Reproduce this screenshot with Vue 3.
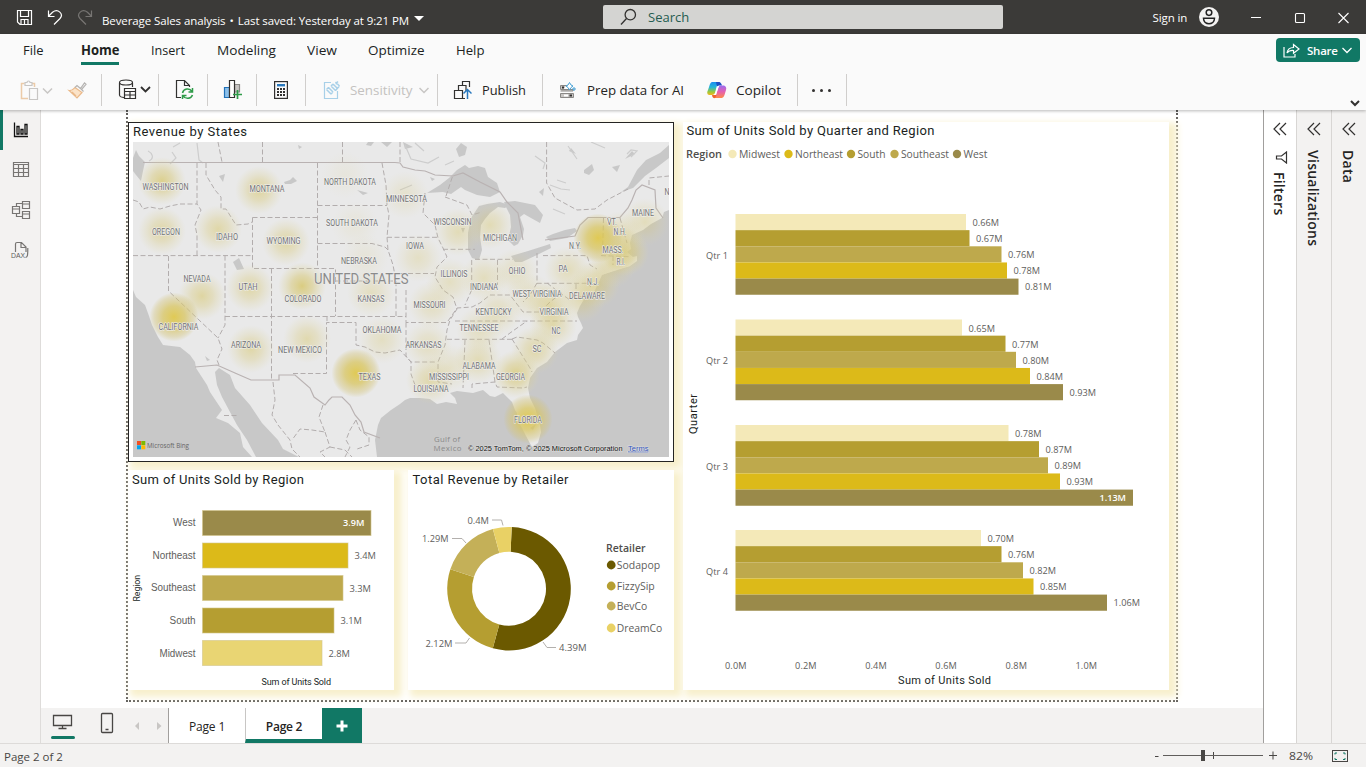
<script setup>
const tabs = ['File', 'Home', 'Insert', 'Modeling', 'View', 'Optimize', 'Help']
const tabWidths = [20.5, 38.5, 34, 59, 30, 56.5, 28.5]
const tabList = tabs.map((label, i) => ({ label, w: tabWidths[i] }))

const palette = ['#f4e9b8', '#b59e31', '#bea94c', '#dcba19', '#9a8a4a']
const quarters = [
  { name: 'Qtr 1', y: 214, w: [230.5, 234, 266, 271.5, 283], v: ['0.66M', '0.67M', '0.76M', '0.78M', '0.81M'] },
  { name: 'Qtr 2', y: 319.5, w: [226.5, 270, 280.5, 294.5, 327.5], v: ['0.65M', '0.77M', '0.80M', '0.84M', '0.93M'] },
  { name: 'Qtr 3', y: 425, w: [273, 303.5, 312.5, 324.5, 397.5], v: ['0.78M', '0.87M', '0.89M', '0.93M', '1.13M'] },
  { name: 'Qtr 4', y: 530, w: [245.5, 266, 287.5, 298, 371.5], v: ['0.70M', '0.76M', '0.82M', '0.85M', '1.06M'] }
]
const axis = ['0.0M', '0.2M', '0.4M', '0.6M', '0.8M', '1.0M']
const legend = [
  { n: 'Midwest', x: 739, w: 41, c: '#f4e9b8' },
  { n: 'Northeast', x: 795, w: 48, c: '#dcba19' },
  { n: 'South', x: 857.5, w: 28, c: '#b59e31' },
  { n: 'Southeast', x: 901, w: 48, c: '#bea94c' },
  { n: 'West', x: 963.5, w: 24, c: '#9a8a4a' }
]
const regions = [
  { n: 'West', w: 169, v: '3.9M', c: '#9a8a4a', tw: 22.5 },
  { n: 'Northeast', w: 146, v: '3.4M', c: '#dcba19', tw: 43 },
  { n: 'Southeast', w: 141, v: '3.3M', c: '#bea94c', tw: 44.5 },
  { n: 'South', w: 132, v: '3.1M', c: '#b59e31', tw: 26 },
  { n: 'Midwest', w: 120, v: '2.8M', c: '#e9d573', tw: 36 }
]
const retailers = [
  { n: 'Sodapop', y: 565, w: 43.5, c: '#6b5900' },
  { n: 'FizzySip', y: 586, w: 38, c: '#b59e31' },
  { n: 'BevCo', y: 606, w: 30.5, c: '#c4b058' },
  { n: 'DreamCo', y: 628, w: 45.5, c: '#e9d165' }
]
function arc(a, b) {
  const cx = 509, cy = 588.7, R = 61.8, r = 37
  const p = (rad, deg) => {
    const t = (deg * Math.PI) / 180
    return `${(cx + rad * Math.sin(t)).toFixed(2)} ${(cy - rad * Math.cos(t)).toFixed(2)}`
  }
  const big = b - a > 180 ? 1 : 0
  return `M${p(R, a)}A${R} ${R} 0 ${big} 1 ${p(R, b)}L${p(r, b)}A${r} ${r} 0 ${big} 0 ${p(r, a)}Z`
}
const slices = [
  { d: arc(2.5, 195.2), c: '#6b5900' },
  { d: arc(195.2, 288.3), c: '#b59e31' },
  { d: arc(288.3, 344.9), c: '#c4b058' },
  { d: arc(344.9, 362.5), c: '#e9d165' }
]

const spots = [
  [162, 181, .7], [259, 190, .58], [162, 231, .52], [218, 229, .5], [286, 242, .52], [202, 296, .55], [250, 288, .5],
  [302, 286, .8], [251, 349, .5], [307, 339, .45], [382, 340, .3], [371, 293, .32], [365, 258, .14],
  [345, 175, .1], [355, 225, .12], [405, 195, .22], [418, 258, .28], [458, 232, .38], [490, 225, .4], [450, 282, .3],
  [484, 278, .34], [515, 272, .28], [432, 305, .32], [428, 345, .32], [430, 380, .48], [450, 368, .26], [478, 360, .4],
  [480, 330, .32], [498, 312, .34], [530, 297, .3], [550, 305, .5], [553, 325, .45], [535, 350, .5], [516, 374, .7],
  [568, 270, .36], [625, 252, .75], [620, 235, .4], [645, 222, .35], [596, 284, .55], [582, 298, .45], [612, 264, .45]
]
const hot = [[174, 317], [356, 373], [528, 419], [598, 238]]

const places = [
  ['WASHINGTON', 165.5, 190, 46], ['MONTANA', 267, 191.5, 35], ['NORTH DAKOTA', 350, 185, 52], ['MINNESOTA', 406.5, 201.5, 41],
  ['OREGON', 166, 234.5, 28], ['IDAHO', 227, 239.5, 22], ['WYOMING', 283.5, 244, 34], ['SOUTH DAKOTA', 352, 226, 52],
  ['NEBRASKA', 359, 264, 36], ['NEVADA', 197, 282, 27], ['UTAH', 248, 290, 19], ['COLORADO', 303, 301.5, 37],
  ['KANSAS', 371, 301.5, 27], ['CALIFORNIA', 178.5, 329.5, 40], ['ARIZONA', 246, 347.5, 30], ['NEW MEXICO', 300, 352.5, 44],
  ['TEXAS', 369.5, 380, 22], ['OKLAHOMA', 382, 333, 39], ['WISCONSIN', 452.5, 224.5, 38], ['MICHIGAN', 500, 241, 34],
  ['IOWA', 415, 249, 18], ['ILLINOIS', 454, 277, 27], ['OHIO', 517, 273.5, 17], ['INDIANA', 484, 290, 28], ['N.Y.', 575, 249, 12],
  ['PA', 563, 272, 9], ['N.J.', 593, 285, 12], ['VT.', 612, 224.5, 10], ['N.H.', 620, 234.5, 13], ['MASS.', 613, 252.5, 21],
  ['R.I.', 621, 265, 9], ['MAINE', 643, 216, 22], ['N', 667, 195, 5], ['MISSOURI', 429.5, 308, 32], ['WEST VIRGINIA', 537, 297, 49],
  ['DELAWARE', 587, 298.5, 36], ['KENTUCKY', 493.5, 314.5, 36], ['VIRGINIA', 554, 314.5, 29], ['TENNESSEE', 479, 331, 39],
  ['NC', 556, 334, 9], ['SC', 537, 352, 9], ['ARKANSAS', 423.5, 347.5, 36], ['ALABAMA', 479, 368.5, 33], ['MISSISSIPPI', 449, 380, 40],
  ['GEORGIA', 510.5, 380, 29], ['LOUISIANA', 431, 391.5, 35], ['FLORIDA', 528, 423, 28]
]
const dashes = [
  'M133 200L139 202 143 209 150 207 160 209 170 206 180 204H197', 'M197 163V204L201 210 195 225 197 235V255', 'M133 255.6H252',
  'M206 163V175L215 190 221 197V209H226L236 225 248 224 252 222', 'M252.5 217.5H317.5M252.5 217.5V268.5H335.5V316M317.5 163V268.5',
  'M317.5 205.5H387M317.5 243.5H372L385 247 388 250M335.5 281H396', 'M382 163L386 185 387 205 389 215 387 237 388 250 393 265 396 281V316',
  'M387 237.3H437M393 273.5H434', 'M225 255.6V325L218 338M168.5 256V291L218 338 222 349 217 360 219 365', 'M225 316.5H406M271.5 268.5V380',
  'M293 373.5H326.5V322.5H356V345L365 347 375 352 385 353 400 350 411 362V374L415 385M327 316V322',
  'M406 290V322.5H448M406 322.5V356L411 362H437', 'M425 193L423 213 435 225 438 238 443 248 447 257 437 267 435 277 443 290 453 297 457 309 450 320 447 330 445 345 438 362V382L452 384',
  'M443 249.3H475M471.7 260V290L465 305M497.5 260V285M475 259.3H513', 'M537 253V283.3H587L591 287M543 255.6H587L590 265 597 269',
  'M603.5 218L602.5 256M620 218L627 243M601 255.6L630 256.7M613 256V265', 'M546.6 142V183L555 198 577 210 595 209 607 200 630 188M649 185V178L669 176',
  'M445 197L467 205 472 215 482 212M446 196L453 175', 'M455 321H577M447 339.3H512', 'M512 339L517 337 537 340 543 343 555 353M502 339L510 333 527 321',
  'M512 339L530 368 532 372M465 340L463 388M489 340L495 382M472 388V384L495 382 497 387 523 388 527 387',
  'M448 321L457 308 472 307 480 303 490 295 510 295 523 312 540 312 550 302 563 292M537 283L530 295 523 302M547 283L560 293 570 300',
  'M262.5 142V163M342.5 142V163M218 142L222 162M400 142V162', 'M273 382L275 400 272 415 278 425 290 440 292 449 300 457',
  'M323 405L319 417 325 432 312 430 300 429 292 440M325 432L330 447 320 452 325 457M330 447L345 450 352 457M356 420L350 430 346 440 350 447 345 457M356 420L360 430 369 437V445L357 449',
  'M224 415.5H237M576 284V296L582 297'
]
</script>

<template>
  <div class="app">
    <header class="titlebar">
      <svg class="quick" width="100" height="34" viewBox="0 0 100 34" fill="none" stroke="#fff" stroke-width="1.2">
        <path d="M17.5 10.500H31.500V24.500H20L17.500 22ZM20.500 10.500V16.500H28.500V10.500M21 24V19.500H28V24M24.500 20V24" />
        <path d="M48.500 10.500V16.500H54.500M48.800 16L52.500 12.300C58 8 64 14 60 18.500L54 24.500" />
        <path stroke="#777573" d="M91.500 10.500V16.500H85.500M91.200 16L87.500 12.300C82 8 76 14 80 18.500L86 24.500" />
      </svg>
      <div class="doc"><span>Beverage Sales analysis</span><i>•</i><span class="saved">Last saved: Yesterday at 9:21 PM</span></div>
      <svg class="caret" width="10" height="6"><path d="M0 0H10L5 5Z" fill="#fff" /></svg>
      <div class="search">
        <svg width="18" height="18" viewBox="0 0 18 18" fill="none" stroke="#323130" stroke-width="1.3"><circle cx="10.300" cy="6.700" r="5.200" /><path d="M6.500 10.500L1 16.500" /></svg>
        <span>Search</span>
      </div>
      <span class="signin">Sign in</span>
      <svg class="avatar" width="20" height="20"><circle cx="10" cy="10" r="10" fill="#f3f2f1" /><g fill="none" stroke="#222" stroke-width="1.500"><circle cx="10" cy="5.600" r="2.800" /><path d="M4.500 11.300H15.500C15.500 18.500 4.500 18.500 4.500 11.300Z" /></g></svg>
      <svg class="win" width="110" height="34" fill="none" stroke="#fff" stroke-width="1.100"><path d="M5 17.500H15M92.500 13L102.500 23M102.500 13L92.500 23" /><rect x="49.500" y="13.500" width="9" height="9" rx="1" /></svg>
    </header>

    <div class="ribbon">
      <nav class="tabs">
        <div v-for="t in tabList" :key="t.label" class="tab" :class="{ on: t.label === 'Home' }">
          <svg :width="t.w + 1" height="20"><text x="0" y="15" :textLength="t.w" lengthAdjust="spacingAndGlyphs">{{ t.label }}</text></svg>
        </div>
        <button class="share">
          <svg width="17" height="15" viewBox="0 0 17 15" fill="none" stroke="#fff" stroke-width="1.200"><path d="M1 4V14H12V11M4 10C4.500 6.500 7 4.500 10.500 4.500V1.500L16 6 10.500 10.200V7.500C7.500 7.300 5.500 8 4 10Z" /></svg>
          <span>Share</span>
          <svg width="10" height="7" fill="none" stroke="#fff" stroke-width="1.300"><path d="M.5 1L5 5.500 9.500 1" /></svg>
        </button>
      </nav>
      <div class="tools">
        <div class="grp g1">
          <svg width="68" height="26" viewBox="20 77 68 26" fill="none" stroke-width="1.200">
            <path stroke="#eccba8" stroke-width="1.500" d="M28 98.500H21.500V83.500H24.500M32 83.500H34.500V87" /><path stroke="#c8c6c4" d="M25 85.500V82.500H27C27 80.500 30 80.500 30 82.500H32V85.500ZM29.500 88.500H37.500V99.500H29.500Z" />
            <path stroke="#c8c6c4" stroke-width="1.500" d="M43 88.500L47.500 93 52 88.500" />
            <path fill="#fbe3c8" stroke="#eab98a" d="M69 90.500C72 91 74 88.500 75 87.500L82 92.500 77 98ZM72 92L76 96" /><path stroke="#b5b3b1" d="M75 87.500L77 85.500 80.500 88.500 84.500 83 86 84.300 81.500 89.500 83.500 91.500" />
          </svg>
        </div>
        <div class="grp g2">
          <svg width="34" height="24" viewBox="118 79 34 24" fill="none" stroke="#323130" stroke-width="1.200">
            <ellipse cx="126" cy="83.500" rx="6.500" ry="2.500" /><path d="M119.500 84V96C119.500 97.500 122 98.500 124 98.500M132.500 84V88M124.500 89.500H135.500V99.500H124.500ZM124.500 92.500H135.500M124.500 96H135.500M130 92.500V99.500" /><path stroke-width="1.800" d="M141 88L145.500 92.500 150 88" />
          </svg>
        </div>
        <div class="grp g3">
          <svg width="20" height="22" viewBox="175 80 20 22" fill="none" stroke="#323130" stroke-width="1.200">
            <path d="M181 98.500H176.500V81.500H184.500L189.500 86.500V88M184.500 81.500V86.500H189.500" />
            <path stroke="#2f9b49" stroke-width="1.500" d="M182.500 94C183.500 89.500 189.500 88.500 192 92.500M192.500 89V93H188.500M192.500 96C191 100 185.500 100.500 183 96.800M182.500 100V96.500H186.500" />
          </svg>
        </div>
        <div class="grp g4">
          <svg width="20" height="22" viewBox="223 80 20 22" fill="none" stroke="#323130" stroke-width="1.200">
            <path fill="#8cc0ea" stroke="#2071b8" d="M224.500 88.500H229.500V98.500H224.500Z" /><path fill="#c8c6c4" stroke="#8a8886" d="M234.500 85.500H239.500V93H234.500Z" /><path fill="#fff" d="M229.500 81.500H234.500V98.500H229.500Z" /><path stroke="#2f9b49" stroke-width="1.700" d="M237.500 91V100M233 95.500H242" />
          </svg>
        </div>
        <div class="grp g5">
          <svg width="14" height="18" fill="none"><rect x=".6" y=".6" width="12.800" height="16.800" stroke="#323130" stroke-width="1.200" /><path stroke="#2878bd" stroke-width="2.400" d="M3 4.200H11" /><path stroke="#323130" stroke-width="2" stroke-dasharray="2 1" d="M3 8H11M3 11H11M3 14H11" /></svg>
        </div>
        <div class="grp g6">
          <svg width="18" height="20" fill="none" stroke="#a8d0e8" stroke-width="1.200"><path d="M8 2.500H1.500V18.500H14.500V11" /><path d="M3.500 9.500L8 14M5.500 7.500L10 12M3.500 9.500L5.500 7.500M8 14L10 12M8 6L12.500 10.500M10 4L14.500 8.500M12.500 2L16.500 6M8 6L10 4M12.500 10.500L16.500 6M15 1.500L12.500 4" stroke-width="1.500" /></svg>
          <svg class="lbl" width="64" height="20"><text x="0" y="15" textLength="62.500" lengthAdjust="spacingAndGlyphs" fill="#c4c2c0">Sensitivity</text></svg>
          <svg width="10" height="7" fill="none" stroke="#c8c6c4" stroke-width="1.500"><path d="M.5 1L5 5.500 9.500 1" /></svg>
        </div>
        <div class="grp g7">
          <svg width="19" height="20" viewBox="453 80 19 20" fill="none" stroke="#323130" stroke-width="1.200"><path d="M454.500 90.500H462.500V98.500H454.500ZM458.500 90V85.500H462.500M462.500 86V81.500H469.500V87M460 85.500H466V91M462.500 98.500H465" /><path stroke="#2878bd" stroke-width="1.500" d="M467.500 99V90M463.500 93.500L467.500 89.500 471.500 93.500" /></svg>
          <svg class="lbl" width="45" height="20"><text x="0" y="15" textLength="44" lengthAdjust="spacingAndGlyphs">Publish</text></svg>
        </div>
        <div class="grp g8">
          <svg width="17" height="17" viewBox="559 81 17 17" fill="none" stroke="#8a8886"><path fill="#c8c6c4" d="M568 84.500H560.500V88.500H573V90H560.500M560.500 92.500H573.500V96.500H560.500Z" /><path fill="#fff" stroke="none" d="M564 93.500H568V95.500H564ZM565 85.500H568V87.500H565Z" /><path stroke-width="2" stroke="#323130" d="M562 86.500H564M569.500 94.500H572" /><path fill="#fff" stroke="#45a0d5" d="M569.500 81.500L571 84 573 85 571 86.500 569.500 89 568 86.500 566 85 568 84Z" /><path stroke="#45a0d5" d="M574 86V90M572 88H576" /></svg>
          <svg class="lbl" width="98" height="20"><text x="0" y="15" textLength="97" lengthAdjust="spacingAndGlyphs">Prep data for AI</text></svg>
          <svg class="cop" width="20" height="18" viewBox="0 0 20 18">
            <defs>
              <linearGradient id="ca" x1="0" y1="0" x2="0" y2="1"><stop offset="0" stop-color="#1a8df0" /><stop offset=".4" stop-color="#22b6d8" /><stop offset=".75" stop-color="#9bc83c" /><stop offset="1" stop-color="#f2b71c" /></linearGradient>
              <linearGradient id="cb" x1="0" y1="0" x2="0" y2="1"><stop offset="0" stop-color="#9a6cf0" /><stop offset=".5" stop-color="#e560b0" /><stop offset="1" stop-color="#ff8a48" /></linearGradient>
            </defs>
            <path fill="url(#ca)" d="M5 1H13L10 4 8 12Q7 14 5 14H2Q-1 13 1 9L3 3Q4 1 5 1Z" /><path fill="#1b4fc4" d="M9 1H12Q14 1 15 4.500H12Q10.500 4.500 10 6Z" />
            <path fill="url(#cb)" d="M15 17H6L9 14 11.500 6Q12 4.500 14 4.500H17Q20 5.500 19 9L17.500 14Q16.500 17 15 17Z" /><path fill="#f0642f" d="M5 14H9.500L8.500 16.500Q7 18 5.500 16Z" /><path fill="#fff" d="M10.500 5H12L9 13.500H7.800Z" />
          </svg>
          <svg class="lbl" width="46" height="20"><text x="0" y="15" textLength="45" lengthAdjust="spacingAndGlyphs">Copilot</text></svg>
        </div>
        <div class="grp g9"><i></i><i></i><i></i></div>
        <svg class="collapse" width="10" height="7" fill="none" stroke="#323130" stroke-width="2"><path d="M1 1L5 5 9 1" /></svg>
      </div>
    </div>

    <div class="body">
      <aside class="rail">
        <svg width="40" height="160" viewBox="0 110 40 160" fill="none" stroke="#777573" stroke-width="1.200">
          <path stroke="#111" stroke-width="1.300" d="M14.500 122.500V136.500H28M17 134V126.500H19V134ZM21 134V129.500H23V134ZM25 134V124.500H27V134Z" />
          <path d="M13.500 162.500H28.500V176.500H13.500ZM13.500 164.500H28.500M13.500 168.500H28.500M13.500 172.500H28.500M18.500 164.500V176.500M23.500 164.500V176.500" />
          <path d="M12.500 206.500H19.500V213.500H12.500ZM12.500 209H19.500M22.500 201.500H29.500V208.500H22.500ZM22.500 204H29.500M22.500 211.500H29.500V218.500H22.500ZM22.500 214H29.500M16.500 206V203.500H22M16.500 214V216.500H22" />
          <path d="M15.500 252V244Q15.500 242.500 17 242.500H21.500L26 247V252M21 242.500V247.500H26" />
          <path d="M25.500 257.500C27.500 257 27.800 256 27.800 248" />
          <text x="11" y="257.500" class="dax" textLength="14" lengthAdjust="spacingAndGlyphs">DAX</text>
        </svg>
      </aside>

      <main class="main">
        <section class="stage">
          <div class="report">
            <article class="card map">
              <svg width="544" height="338" viewBox="129 123 544 338">
                <defs>
                  <radialGradient id="warm"><stop offset="0" stop-color="#d6c566" stop-opacity="1" /><stop offset=".45" stop-color="#d8ca80" stop-opacity=".72" /><stop offset=".8" stop-color="#dcd39c" stop-opacity=".3" /><stop offset="1" stop-color="#ded7ad" stop-opacity="0" /></radialGradient>
                  <radialGradient id="hot"><stop offset="0" stop-color="#dfc644" stop-opacity=".9" /><stop offset=".45" stop-color="#d8c560" stop-opacity=".75" /><stop offset=".8" stop-color="#d4c478" stop-opacity=".4" /><stop offset="1" stop-color="#d0c06a" stop-opacity="0" /></radialGradient>
                  <clipPath id="mc"><rect x="133" y="142" width="536" height="315" /></clipPath>
                </defs>
                <text class="title" x="133" y="136" textLength="114">Revenue by States</text>
                <g clip-path="url(#mc)">
                  <rect x="133" y="142" width="536" height="315" fill="#e9e9e9" />
                  <g fill="#c8c8c8">
                    <path d="M133 290L136 297 145 305 149 316 152 325 158 337 163 345 180 347 190 355 195 362 196 368 207 385 210 392 222 410 216 418 228 423 240 433 243 447 252 457H133ZM256 457L247 440 237 425 230 412 222 397 217 385 215 372 219 368 230 375 235 388 250 405 262 423 278 440 283 449 299 457Z" />
                    <path d="M377 457L375 440 378 425 381 418 391 410 400 404 405 400 410 398 420 398 430 399 437 404 446 402 457 404 455 398 450 393 457 391 473 393 483 390 490 396 495 397 503 393 512 402 515 410 517 413 517 420 522 428 526 436 532 447 538 443 541 432 540 425 535 408 530 398 528 388 530 378 537 368 547 362 555 352 567 343 577 340 578 335 583 328 581 323 578 317 577 313 580 306 586 296 594 292 598 284 602 275 618 269 630 266 637 261 637 256 633 257 627 252 631 249 630 243 632 235 643 230 651 224 662 218 664 212 669 210V457Z" />
                    <path d="M669 145L660 153 646 160 637 170 628 187 621 192 633 188 645 176 656 168 669 158Z" />
                    <path d="M427 193L440 185 449 178 457 170 465 165 469 168 478 166 485 168 488 177 497 183 500 192 490 197 477 195 465 190 461 187 451 194 443 192Z" />
                    <path d="M472 258L468 250 468 233 471 218 479 206 487 204 500 202 509 205 505 208 498 207 490 213 485 219 481 225 480 237 482 250 479 260Z" />
                    <path d="M504 202L515 201 535 205 543 215 540 223 531 218 524 214 520 217 524 229 523 235 518 244 514 246 508 240 511 227 510 215 506 207Z" />
                    <path d="M511 256L528 251 550 244 551 248 537 255 522 262 515 262ZM546 237L553 234 565 230 575 228 577 231 567 238 550 241Z" />
                    <path d="M133 158L136 150 139 156 145 162 143 171 141 181 136 175 133 171ZM233 262L239 258 244 269 237 270ZM456 149L461 143 467 147 465 155 459 157ZM584 170L592 164 594 170 589 175 584 173ZM612 167L620 165 617 172ZM544 188L543 196 539 192Z" />
                    <path d="M284 182L290 180 293 177 297 181 291 184 285 184ZM298 145L302 147 299 149ZM357 190L368 193 363 195ZM219 176L225 174 223 182ZM368 142L374 142 371 146 366 145ZM403 142L413 147 405 149ZM381 142L392 142 387 147ZM435 179L430 177 432 181ZM465 228L463 233 461 228ZM205 356L210 360 207 361ZM530 428L536 424 533 430ZM571 148L576 154 569 151ZM632 151L635 154 625 159Z" />
                  </g>
                  <path d="M603 270L620 266 630 266 611 272 601 275Z" fill="#e9e9e9" />
                  <path fill="none" stroke="#cdcdcd" stroke-width="1.200" d="M148 151C152 153 155 158 149 161M172 152L176 158 170 164M197 143L199 160 203 163M180 143L173 147M405 145L411 159 428 163 439 157M415 143L424 151M445 165L454 161M535 156L545 163 543 169M557 180L566 183M568 146L577 159M591 142L605 148M550 185L561 189 570 190M627 154L631 150 637 151 631 157M553 209L565 214M400 190L412 185" />
                  <g fill="none" stroke="#b2adad" stroke-width="1" stroke-dasharray="5 2.500"><path v-for="d in dashes" :key="d" :d="d" /></g>
                  <path fill="none" stroke="#b9b2b2" stroke-width="1.200" d="M143 162.500H395L400 163 403 167 415 170 425 171 435 175 453 176 463 173 480 182 500 192 507 202 518 213 523 240M545 240L575 236 580 225 588 217.500H620L628 208 632 200 636 190 642 185 655 190 656 208 663 218M195 367L217 365 235 373 251 380H279V375H295L310 388 314 397 325 405 329 400 332 397H342L350 405 355 415 361 422 364 432 380 438" />
                  <circle v-for="(s, i) in spots" :key="i" :cx="s[0]" :cy="s[1]" r="24" fill="url(#warm)" :opacity="s[2]" />
                  <circle v-for="(s, i) in hot" :key="'h' + i" :cx="s[0]" :cy="s[1]" r="24.500" fill="url(#hot)" />
                  <g class="place"><text v-for="p in places" :key="p[0]" :x="p[1] - p[3] / 2" :y="p[2] + .3" :textLength="p[3]" lengthAdjust="spacingAndGlyphs">{{ p[0] }}</text></g>
                  <text class="country" x="314" y="283.500" textLength="94.500" lengthAdjust="spacingAndGlyphs">UNITED STATES</text>
                  <g class="gulf"><text x="434" y="441.500" textLength="26">Gulf of</text><text x="433.500" y="450.500" textLength="28">Mexico</text></g>
                  <path fill="#f25022" d="M137 441H141V445H137Z" /><path fill="#7fba00" d="M141.300 441H145.300V445H141.300Z" /><path fill="#00a4ef" d="M137 445.300H141V449.300H137Z" /><path fill="#ffb900" d="M141.300 445.300H145.300V449.300H141.300Z" />
                  <text class="bing" x="147" y="448" textLength="42" lengthAdjust="spacingAndGlyphs">Microsoft Bing</text>
                  <text class="copy" x="468" y="450.500" textLength="154.500" lengthAdjust="spacingAndGlyphs">© 2025 TomTom, © 2025 Microsoft Corporation</text>
                  <text class="copy terms" x="628" y="450.500" textLength="20.500" lengthAdjust="spacingAndGlyphs">Terms</text>
                </g>
              </svg>
            </article>

            <article class="card region">
              <svg width="266" height="220" viewBox="128 470 266 220">
                <text class="title" x="132" y="484" textLength="172">Sum of Units Sold by Region</text>
                <g v-for="(r, i) in regions" :key="r.n">
                  <rect x="202.500" :y="510.500 + i * 32.500" :width="r.w - .5" height="25" :fill="r.c" stroke="#d2c58a" stroke-opacity=".6" />
                  <text class="cat" :x="195.500 - r.tw" :y="526 + i * 32.700" :textLength="r.tw" lengthAdjust="spacingAndGlyphs">{{ r.n }}</text>
                  <text v-if="i" class="num" :x="208.500 + r.w" :y="559 + (i - 1) * 32.500" textLength="21.500" lengthAdjust="spacingAndGlyphs">{{ r.v }}</text>
                  <text v-else class="num inv" x="343" y="526" textLength="21.500" lengthAdjust="spacingAndGlyphs">{{ r.v }}</text>
                </g>
                <text class="axis" transform="translate(139.500 601.500) rotate(-90)" textLength="26.500" lengthAdjust="spacingAndGlyphs">Region</text>
                <text class="axis" x="261.500" y="685" textLength="69.500">Sum of Units Sold</text>
              </svg>
            </article>

            <article class="card retail">
              <svg width="266" height="220" viewBox="408 470 266 220">
                <text class="title" x="412.500" y="484" textLength="156">Total Revenue by Retailer</text>
                <path v-for="s in slices" :key="s.c" :d="s.d" :fill="s.c" />
                <path fill="none" stroke="#b3b0ad" d="M492 520H501.500L503 525.500M452 538.500H462L466 543M455 643H466L469.500 638M556 647.500H547L543 642" />
                <text class="num" x="467.500" y="524" textLength="21.500" lengthAdjust="spacingAndGlyphs">0.4M</text>
                <text class="num" x="422" y="542" textLength="26.500" lengthAdjust="spacingAndGlyphs">1.29M</text>
                <text class="num" x="425.500" y="647" textLength="27" lengthAdjust="spacingAndGlyphs">2.12M</text>
                <text class="num" x="559" y="651" textLength="27.500" lengthAdjust="spacingAndGlyphs">4.39M</text>
                <text class="lhead" x="606" y="552" textLength="39.500" lengthAdjust="spacingAndGlyphs">Retailer</text>
                <g v-for="r in retailers" :key="r.n"><circle cx="611.200" :cy="r.y" r="4.400" :fill="r.c" /><text class="leg" x="616.800" :y="r.y + 4.200" :textLength="r.w" lengthAdjust="spacingAndGlyphs">{{ r.n }}</text></g>
              </svg>
            </article>

            <article class="card quarter">
              <svg width="486" height="568" viewBox="683 122 486 568">
                <text class="title" x="686.500" y="135" textLength="248">Sum of Units Sold by Quarter and Region</text>
                <text class="lhead" x="686" y="158" textLength="36" lengthAdjust="spacingAndGlyphs">Region</text>
                <g v-for="l in legend" :key="l.n"><circle :cx="l.x - 6.500" cy="154" r="4.200" :fill="l.c" /><text class="leg" :x="l.x" y="158" :textLength="l.w" lengthAdjust="spacingAndGlyphs">{{ l.n }}</text></g>
                <g v-for="q in quarters" :key="q.name">
                  <rect v-for="(w, i) in q.w" :key="i" x="735.500" :y="q.y + i * 16.150" :width="w" height="16.150" :fill="palette[i]" />
                  <text v-for="(v, i) in q.v" :key="'v' + i" class="num" :class="{ inv: v === '1.13M' }" :x="v === '1.13M' ? 1099.500 : 735.500 + q.w[i] + 6.500" :y="q.y + i * 16 + 12" textLength="26.500" lengthAdjust="spacingAndGlyphs">{{ v }}</text>
                  <text class="cat q" x="706" :y="q.y + 44.800" textLength="22">{{ q.name }}</text>
                </g>
                <text v-for="(a, i) in axis" :key="a" class="cat q" :x="725 + i * 70.100" y="668.500" textLength="21.500">{{ a }}</text>
                <text class="axis big" transform="translate(697 434) rotate(-90)" textLength="40">Quarter</text>
                <text class="axis big" x="898" y="684" textLength="93">Sum of Units Sold</text>
              </svg>
            </article>
          </div>
        </section>
        <footer class="pages">
          <svg width="127" height="35" viewBox="41 708 127 35" fill="none" stroke="#484644" stroke-width="1.300">
            <path d="M53.500 715.500H71.500V725.500H53.500ZM62.500 725.500V728.500M58.500 728.500H66.500" /><rect x="101.500" y="713.500" width="11" height="19" rx="1" /><path stroke-width="1.500" d="M105.500 729.500H108.500" />
            <path stroke="#117865" stroke-width="3" stroke-linecap="round" d="M52.500 737.500H73.500" /><path fill="#c8c6c4" stroke="none" d="M139 722V730L135 726ZM157 722V730L161.500 726Z" />
          </svg>
          <div class="page">Page 1</div>
          <div class="page cur">Page 2</div>
          <div class="add"><svg width="12" height="12" stroke="#fff" stroke-width="3"><path d="M6 .5V11.500M.5 6H11.500" /></svg></div>
        </footer>
      </main>

      <aside class="pane filters">
        <svg width="14" height="14"><path d="M7 1L1 7 7 13M13 1L7 7 13 13" /></svg>
        <svg class="funnel" width="13" height="13"><path d="M11.500 1V12L6.500 8H1.500V5H6.500Z" /></svg><span>Filters</span>
      </aside>
      <aside class="pane vis"><svg width="14" height="14"><path d="M7 1L1 7 7 13M13 1L7 7 13 13" /></svg><span>Visualizations</span></aside>
      <aside class="pane data"><svg width="14" height="14"><path d="M7 1L1 7 7 13M13 1L7 7 13 13" /></svg><span>Data</span></aside>
    </div>

    <div class="status">
      <span class="count">Page 2 of 2</span>
      <svg width="211" height="23" viewBox="1155 744 211 23" fill="none" stroke="#484644">
        <path d="M1154.500 756.500H1158.500M1269 755.500H1277M1273 751.500V759.500M1213.500 752V759" /><path stroke="#605e5c" d="M1163 755.500H1263" /><path stroke-width="4" d="M1203 750V761" />
        <text x="1289" y="760" textLength="24" lengthAdjust="spacingAndGlyphs" class="pct">82%</text>
        <rect x="1332.500" y="750.500" width="15" height="11" /><path d="M1335 754.500V753H1337M1343 753H1345V754.500M1345 758V759.500H1343M1337 759.500H1335V758" stroke="#117865" />
      </svg>
    </div>
  </div>
</template>

<style>
body { margin: 0; overflow: hidden; }
</style>

<style scoped>
* { box-sizing: border-box; }
svg { display: block; flex: none; }
.app { width: 1366px; height: 767px; display: flex; flex-direction: column; font-family: "Open Sans", "Noto Sans", sans-serif; color: #252423; background: #fff; }
.titlebar { height: 34px; background: #3b3a38; color: #fff; display: flex; align-items: center; font-size: 11.500px; flex: none; }
.doc { margin-left: 2px; width: 307px; display: flex; white-space: nowrap; padding-top: 6px; letter-spacing: -.1px; }
.doc i { font-style: normal; width: 14px; text-align: center; }
.caret { margin: 3px 0 0 5px; }
.search { margin-left: 179px; width: 400px; height: 24px; border-radius: 2px; background: #d4d4d2; display: flex; align-items: center; padding-left: 17px; gap: 10px; color: #245c50; font-size: 13px; }
.signin { margin-left: 149.500px; width: 46.500px; letter-spacing: -.1px; }
.avatar { margin-right: 27px; }
.ribbon { height: 76px; background: #fafafa; flex: none; position: relative; z-index: 2; box-shadow: 0 1px 3px rgba(0, 0, 0, .28); }
.tabs { height: 34px; padding-left: 23px; display: grid; grid-template-columns: 58px 70px 66px 90px 61px 88px 820px 84px; font-size: 13.500px; fill: #201f1e; }
.tab { display: flex; flex-direction: column; align-items: flex-start; padding-top: 6px; }
.tab.on { font-weight: 700; }
.tab.on::after { content: ""; width: 38px; height: 3px; background: #117865; margin-top: 2px; }
.share { border: 0; padding: 0 0 0 7px; margin-top: 4px; height: 24px; border-radius: 4px; background: #117865; color: #fff; display: flex; align-items: center; font: 600 11.500px "Open Sans", sans-serif; letter-spacing: -.25px; gap: 7px; }
.share span { width: 28px; }
.tools { height: 42px; padding-top: 6px; display: flex; }
.grp { height: 32px; border-right: 1px solid #d0cecc; display: flex; align-items: center; font-size: 13.500px; fill: #252423; }
.g1 { width: 102px; padding-left: 20px; }
.g2 { width: 57px; padding-left: 16px; }
.g3 { width: 49px; padding-left: 16px; }
.g4 { width: 49px; padding-left: 15px; }
.g5 { width: 49px; padding-left: 17px; }
.g6 { width: 132px; padding-left: 17px; }
.g6 .lbl { margin: 0 5px 0 8.500px; }
.g7 { width: 105px; padding-left: 15px; gap: 10px; }
.g8 { width: 255px; padding-left: 16px; }
.g8 .lbl:nth-of-type(2) { margin-left: 11px; }
.g8 .cop { margin: 0 9px 0 22px; }
.g9 { width: 49px; gap: 5px; padding-left: 14px; }
.g9 i { width: 3px; height: 3px; border-radius: 50%; background: #323130; }
.collapse { margin: 26px 0 0 503px; }
.body { flex: 1; display: flex; min-height: 0; }
.rail { width: 41px; background: #f3f2f1; border-right: 1px solid #dedcda; background-image: linear-gradient(#117865, #117865); background-size: 3px 40px; background-repeat: no-repeat; }
.dax { font: 7.500px "Liberation Sans", sans-serif; fill: #605e5c; stroke: none; }
.main { width: 1222px; display: flex; flex-direction: column; }
.stage { height: 598px; padding-left: 85px; }
.report { width: 1052px; height: 592px; border: 2px dotted #605e5c; border-top: 0; padding-top: 12px; display: grid; grid-template: 348px 220px / 280px 275px 486px; }
.card { background: #fff; box-shadow: 5px 4px 7px 3px #f8f0cd; min-width: 0; }
.map { grid-column: 1 / 3; grid-row: 1; width: 546px; height: 340px; border: 1px solid #252423; }
.region, .retail { grid-row: 2; width: 266px; }
.quarter { grid-column: 3; grid-row: 1 / 3; }
.title { font: 400 13px Roboto, sans-serif; fill: #201f1e; }
.cat { font: 10px "Liberation Sans", sans-serif; fill: #605e5c; }
.cat.q { font: 9.200px "Open Sans", sans-serif; }
.num { font: 9.500px "Open Sans", sans-serif; fill: #605e5c; }
.num.inv { font-weight: 600; fill: #fff; }
.axis { font: 9px Roboto, sans-serif; fill: #201f1e; }
.axis.big { font-size: 11px; }
.leg { font: 11.300px "Open Sans", sans-serif; fill: #605e5c; }
.lhead { font: 600 11.300px "Open Sans", sans-serif; fill: #504e4c; }
.place { font: 8.200px Roboto, sans-serif; fill: #737373; stroke: #f0f0f0; stroke-width: 1.200px; paint-order: stroke; }
.country { font: 14px Roboto, sans-serif; fill: #8b8b8b; stroke: #ededed; stroke-width: 1px; paint-order: stroke; }
.gulf { font: 7.800px "Open Sans", sans-serif; fill: #8a8a8a; }
.bing { font: 7.200px "Open Sans", sans-serif; fill: #666; }
.copy { font: 7.500px "Liberation Sans", sans-serif; fill: #111; stroke: #ddd; stroke-width: 1px; paint-order: stroke; }
.terms { fill: #3355bb; text-decoration: underline; }
.pages { height: 35px; background: #f3f2f1; display: flex; font-size: 12px; }
.page { width: 77px; background: #fff; border-left: 1px solid #a19f9d; display: flex; align-items: center; justify-content: center; padding-top: 2px; letter-spacing: -.15px; }
.page.cur { font-weight: 600; border-left-color: #c8c6c4; border-bottom: 4px solid #117865; padding-top: 6px; letter-spacing: -.25px; }
.add { width: 40px; background: #117865; display: flex; align-items: center; justify-content: center; }
.pane { background: #f3f2f1; border-left: 1px solid #d8d6d4; padding: 12px 0 0 10px; width: 35px; }
.pane svg { fill: none; stroke: #323130; stroke-width: 1.200; }
.pane span { display: block; writing-mode: vertical-rl; font-size: 14px; font-weight: 600; line-height: 18px; letter-spacing: .25px; margin: 14px 0 0 -3px; }
.pane.filters { background: #fff; border-left: 1px solid #a19f9d; width: 33px; padding-left: 9px; }
.pane .funnel { margin: 15px 0 0 2px; }
.pane.filters span { margin: 8px 0 0 -3px; }
.status { height: 24px; flex: none; background: #f3f2f1; border-top: 1px solid #dddbd9; display: flex; justify-content: space-between; font-size: 11.500px; color: #484644; }
.count { margin: 5px 0 0 4px; }
.pct { font-size: 11.500px; fill: #484644; stroke: none; }
</style>
